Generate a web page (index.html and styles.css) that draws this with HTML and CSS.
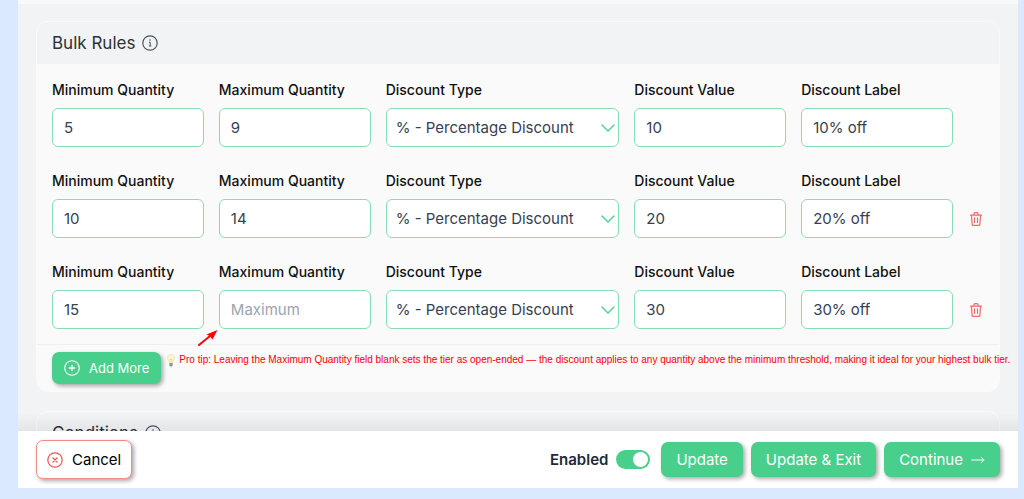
FILE: index.html
```html
<!DOCTYPE html>
<html lang="en">
<head>
  <meta charset="UTF-8">
  <meta name="viewport" content="width=device-width, initial-scale=1.0">
  <title>Bulk Rules</title>
  <link rel="stylesheet" href="styles.css">
</head>
<body>
  <!-- shared icons -->
  <svg class="sprite" aria-hidden="true">
    <symbol id="icon-info" viewBox="0 0 16 16">
      <circle cx="8" cy="8" r="7.2" fill="none" stroke="currentColor" stroke-width="1.2"/>
      <path d="M7 7.200h1.200v3.600M6.800 11h2.600" fill="none" stroke="currentColor" stroke-width="1"/>
      <circle cx="8" cy="5" r=".8" fill="currentColor"/>
    </symbol>
    <symbol id="icon-chevron" viewBox="0 0 14 8">
      <path d="M1 1l6 6 6-6" fill="none" stroke="currentColor" stroke-width="1.3" stroke-linecap="round" stroke-linejoin="round"/>
    </symbol>
    <symbol id="icon-trash" viewBox="0 0 12 14">
      <path d="M.5 3.2h11M3.6 3l.6-1.8q.2-.6.8-.6h2q.6 0 .8.6L8.4 3M1.500 3.400l.6 9q.1 1 1 1h5.800q.9 0 1-1l.6-9M4.500 5.800v4.800M7.500 5.800v4.800" fill="none" stroke="currentColor" stroke-width="1.200" stroke-linecap="round" stroke-linejoin="round"/>
    </symbol>
  </svg>

  <div class="editor">
    <main class="content">
      <section class="card">
        <div class="card-header">
          <h2>Bulk Rules</h2>
          <svg class="icon-info"><use href="#icon-info"/></svg>
        </div>

        <div class="rules">
          <div class="rule">
            <div class="field">
              <label for="min1">Minimum Quantity</label>
              <input type="text" id="min1" value="5">
            </div>
            <div class="field">
              <label for="max1">Maximum Quantity</label>
              <input type="text" id="max1" value="9" placeholder="Maximum">
            </div>
            <div class="field">
              <label for="type1">Discount Type</label>
              <div class="select">
                <select id="type1"><option>% - Percentage Discount</option></select>
                <svg class="icon-chevron"><use href="#icon-chevron"/></svg>
              </div>
            </div>
            <div class="field">
              <label for="value1">Discount Value</label>
              <input type="text" id="value1" value="10">
            </div>
            <div class="field">
              <label for="label1">Discount Label</label>
              <input type="text" id="label1" value="10% off">
            </div>
          </div>

          <div class="rule">
            <div class="field">
              <label for="min2">Minimum Quantity</label>
              <input type="text" id="min2" value="10">
            </div>
            <div class="field">
              <label for="max2">Maximum Quantity</label>
              <input type="text" id="max2" value="14" placeholder="Maximum">
            </div>
            <div class="field">
              <label for="type2">Discount Type</label>
              <div class="select">
                <select id="type2"><option>% - Percentage Discount</option></select>
                <svg class="icon-chevron"><use href="#icon-chevron"/></svg>
              </div>
            </div>
            <div class="field">
              <label for="value2">Discount Value</label>
              <input type="text" id="value2" value="20">
            </div>
            <div class="field">
              <label for="label2">Discount Label</label>
              <input type="text" id="label2" value="20% off">
            </div>
            <button type="button" class="remove" aria-label="Remove rule">
              <svg class="icon-trash"><use href="#icon-trash"/></svg>
            </button>
          </div>

          <div class="rule">
            <div class="field">
              <label for="min3">Minimum Quantity</label>
              <input type="text" id="min3" value="15">
            </div>
            <div class="field">
              <label for="max3">Maximum Quantity</label>
              <input type="text" id="max3" placeholder="Maximum">
              <svg class="pointer" viewBox="0 0 20 17">
                <path d="M1 16L12 7" stroke="#f00" stroke-width="2" stroke-linecap="round"/>
                <path d="M19.500 1L14.500 10.500l-2.500-3.300-3.500-1.700z" fill="#f00"/>
              </svg>
            </div>
            <div class="field">
              <label for="type3">Discount Type</label>
              <div class="select">
                <select id="type3"><option>% - Percentage Discount</option></select>
                <svg class="icon-chevron"><use href="#icon-chevron"/></svg>
              </div>
            </div>
            <div class="field">
              <label for="value3">Discount Value</label>
              <input type="text" id="value3" value="30">
            </div>
            <div class="field">
              <label for="label3">Discount Label</label>
              <input type="text" id="label3" value="30% off">
            </div>
            <button type="button" class="remove" aria-label="Remove rule">
              <svg class="icon-trash"><use href="#icon-trash"/></svg>
            </button>
          </div>
        </div>

        <div class="card-footer">
          <button type="button" class="btn btn-add">
            <svg class="icon-round" viewBox="0 0 16 16" fill="none" stroke="currentColor" stroke-linecap="round">
              <circle cx="8" cy="8" r="7.3" stroke-width="1.1"/>
              <path d="M8 5.400v5.200M5.400 8h5.200" stroke-width="1.300"/>
            </svg>
            Add More
          </button>
          <p class="tip">
            <svg class="icon-bulb" viewBox="0 0 8 13">
              <path d="M4 .5C2 .5.5 2 .5 4c0 2 1.600 2.600 1.900 5h3.200C5.900 6.600 7.500 6 7.500 4 7.500 2 6 .5 4 .5z" fill="#fdf6d0" stroke="#eadf9f" stroke-width=".7"/>
              <path d="M3.300 8.500L2.800 5l1.200.8L5.200 5l-.5 3.500" fill="none" stroke="#e5c870" stroke-width=".5"/>
              <path d="M2.400 9h3.200v2.200L4.800 12.500H3.200L2.400 11.200z" fill="#8f9295"/>
            </svg>
            Pro tip: Leaving the Maximum Quantity field blank sets the tier as open-ended — the discount applies to any quantity above the minimum threshold, making it ideal for your highest bulk tier.
          </p>
        </div>
      </section>

      <section class="card">
        <div class="card-header">
          <h2>Conditions</h2>
          <svg class="icon-info"><use href="#icon-info"/></svg>
        </div>
      </section>
    </main>

    <footer class="actions">
      <button type="button" class="btn btn-cancel">
        <svg class="icon-round" viewBox="0 0 16 16" fill="none" stroke="currentColor" stroke-linecap="round">
          <circle cx="8" cy="8" r="7.2" stroke-width="1.2"/>
          <path d="M6 6l4 4M10 6l-4 4" stroke-width="1.3"/>
        </svg>
        <span>Cancel</span>
      </button>
      <label class="toggle" for="enabled">
        Enabled
        <input type="checkbox" id="enabled" role="switch" checked>
      </label>
      <button type="button" class="btn">Update</button>
      <button type="button" class="btn">Update &amp; Exit</button>
      <button type="button" class="btn">
        Continue
        <svg class="icon-arrow" viewBox="0 0 14 8" fill="none" stroke="currentColor" stroke-linecap="round" stroke-linejoin="round">
          <path d="M.7 4h12.300M10.200 1.200L13 4l-2.800 2.800"/>
        </svg>
      </button>
    </footer>
  </div>
</body>
</html>
```

FILE: styles.css
```css
* {
  box-sizing: border-box;
}
body {
  margin: 0;
  background: #dbe9fe;
  font-family: Inter, "Liberation Sans", sans-serif;
  font-size: 15px;
  color: #1f2937;
}
.sprite {
  display: none;
}
button, input, select {
  font: inherit;
}
svg {
  flex: none;
}

/* page frame */
.editor {
  display: flex;
  flex-direction: column;
  height: 100vh;
  padding: 0 6px 11px 18px;
}
.content {
  flex: 1;
  min-height: 0;
  overflow: hidden;
  display: flex;
  flex-direction: column;
  gap: 19px;
  padding: 17px 18px 0;
  border-top: 4px solid #f8f9fb;
  background: #f2f3f5;
}

/* cards */
.card {
  flex: none;
  border: 1px solid #fafafa;
  border-radius: 12px;
  background: #fafafa;
}
.card-header {
  display: flex;
  align-items: center;
  gap: 7px;
  height: 42px;
  padding: 0 15px;
  border-radius: 11px 11px 0 0;
  background: #f2f3f5;
}
.card-header h2 {
  margin: 0;
  font-size: 17px;
  font-weight: 400;
  color: #2b3138;
}
.icon-info {
  width: 16px;
  height: 16px;
  color: #4b5563;
}
.rules {
  display: flex;
  flex-direction: column;
  gap: 22px;
  padding: 14px 15px 15px;
}
.rule {
  display: grid;
  grid-template-columns: 13fr 13fr 20fr 13fr 13fr 16px;
  gap: 15px;
}
.field {
  position: relative;
  min-width: 0;
}
.field label {
  display: block;
  margin-bottom: 6px;
  font-size: 14px;
  font-weight: 500;
  line-height: 24px;
  color: #111;
}
.field input, .field select {
  display: block;
  width: 100%;
  height: 39px;
  padding: 0 11px;
  border: 1px solid #86dfb0;
  border-radius: 6px;
  background: #fff;
  color: #374151;
}
.field select {
  appearance: none;
  padding: 0 9px;
}
.field input::placeholder {
  color: #9ca3af;
}
.select {
  position: relative;
}
.icon-chevron {
  position: absolute;
  top: 16px;
  right: 4px;
  width: 14px;
  height: 8px;
  color: #48cf8c;
  pointer-events: none;
}
.remove {
  align-self: end;
  display: flex;
  align-items: center;
  justify-content: center;
  height: 39px;
  padding: 0;
  border: none;
  background: none;
  color: #ee6a6a;
  cursor: pointer;
}
.icon-trash {
  width: 12px;
  height: 14px;
}
.pointer {
  position: absolute;
  top: 100%;
  left: -21px;
  width: 20px;
  height: 17px;
}
.card-footer {
  display: flex;
  align-items: flex-start;
  gap: 6px;
  padding: 7px 15px;
  border-top: 1px solid #eeeff1;
}

/* notes */
.tip {
  display: flex;
  align-items: center;
  gap: 4px;
  margin: 0;
  font-family: "Liberation Sans", Arial, sans-serif;
  font-size: 10px;
  line-height: 16px;
  white-space: nowrap;
  color: #f00;
}
.icon-bulb {
  width: 8px;
  height: 13px;
}

/* buttons */
.btn {
  display: flex;
  flex: none;
  align-items: center;
  height: 35px;
  padding: 0 15px;
  border: none;
  border-radius: 7px;
  background: #48cf8c;
  box-shadow: 2px 2px 4px rgba(0, 0, 0, 0.35);
  color: #fff;
  white-space: nowrap;
  cursor: pointer;
}
.btn-add {
  gap: 9px;
  height: 32px;
  padding: 0 12px;
  font-size: 13px;
}
.btn-cancel {
  gap: 9px;
  height: 39px;
  margin-right: auto;
  padding: 0 10px;
  border: 1px solid #f38a8a;
  background: #fff;
  color: #ef5350;
}
.btn-cancel span {
  color: #000;
}
.icon-round {
  width: 16px;
  height: 16px;
}
.icon-arrow {
  width: 14px;
  height: 8px;
  margin-left: 8px;
}

/* bottom bar */
.actions {
  position: relative;
  display: flex;
  flex: none;
  align-items: center;
  gap: 8px;
  height: 57px;
  padding: 0 18px;
  background: #fff;
}
.actions::before {
  content: "";
  position: absolute;
  right: 0;
  bottom: 100%;
  left: 0;
  height: 18px;
  background: linear-gradient(transparent, rgba(0, 0, 0, 0.06));
}
.toggle {
  display: flex;
  align-items: center;
  gap: 8px;
  margin-right: 3px;
  font-weight: 600;
}
.toggle input {
  appearance: none;
  display: flex;
  justify-content: flex-end;
  width: 34px;
  height: 19px;
  margin: 0;
  padding: 2px;
  border-radius: 10px;
  background: #48cf8c;
}
.toggle input::before {
  content: "";
  width: 15px;
  height: 15px;
  border-radius: 50%;
  background: #fff;
}
.toggle input:not(:checked) {
  justify-content: flex-start;
  background: #d1d5db;
}
```
